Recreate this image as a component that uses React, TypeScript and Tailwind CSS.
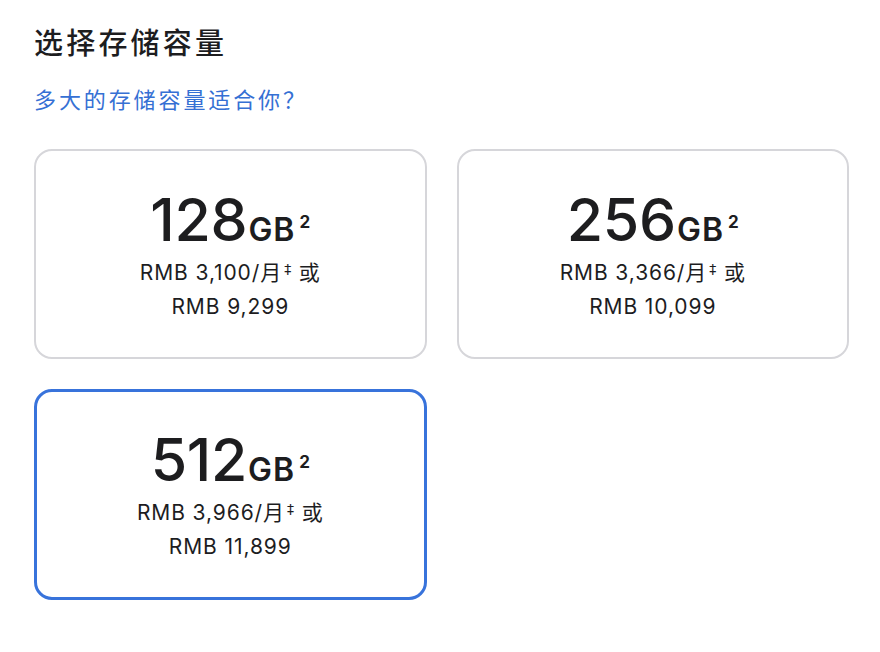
const FONT = '"Inter", "Noto Sans CJK SC", sans-serif';

type Option = {
  size: string;
  monthly: string;
  total: string;
  selected?: boolean;
};

const options: Option[] = [
  { size: "128", monthly: "RMB 3,100/月", total: "RMB 9,299" },
  { size: "256", monthly: "RMB 3,366/月", total: "RMB 10,099" },
  { size: "512", monthly: "RMB 3,966/月", total: "RMB 11,899", selected: true },
];

function StorageCard({ option }: { option: Option }) {
  return (
    <div
      className={
        option.selected
          ? "h-[211px] rounded-[18px] border-[3px] border-[#3873db] bg-white flex flex-col items-center justify-center"
          : "h-[210px] rounded-[18px] border-2 border-[#d6d6da] bg-white flex flex-col items-center justify-center"
      }
    >
      <div className="flex items-baseline text-[#1d1d1f] mt-[4px]">
        <span className="text-[59px] leading-none font-medium tracking-[-0.3px]">
          {option.size}
        </span>
        <span className="text-[32px] leading-none font-semibold ml-[1px] tracking-[1px]">GB</span>
        <span className="text-[17px] leading-none font-bold ml-[4px] relative -top-[13px]">
          2
        </span>
      </div>
      <div className="mt-[8px] text-[21px] leading-[32px] text-[#1d1d1f] text-center tracking-[0.9px]">
        <div>
          {option.monthly}
          <span
            className="text-[14px] ml-[2px] relative -top-[6px]"
            style={{ fontFamily: '"DejaVu Sans", sans-serif' }}
          >
            ‡
          </span>{" "}
          或
        </div>
        <div>{option.total}</div>
      </div>
    </div>
  );
}

export default function App() {
  return (
    <div className="w-[880px] h-[652px] bg-white" style={{ fontFamily: FONT }}>
      <div className="pl-[34px] pr-[31px] pt-[25px]">
        <h2 className="text-[29px] leading-[38px] font-medium text-[#1d1d1f] tracking-[3.2px]">
          选择存储容量
        </h2>
        <a className="block mt-[22px] text-[22px] leading-[30px] text-[#3570d4] tracking-[2.9px]">
          多大的存储容量适合你？
        </a>
        <div className="mt-[34px] grid grid-cols-2 gap-x-[30px] gap-y-[30px]">
          {options.map((o) => (
            <StorageCard key={o.size} option={o} />
          ))}
        </div>
      </div>
    </div>
  );
}
